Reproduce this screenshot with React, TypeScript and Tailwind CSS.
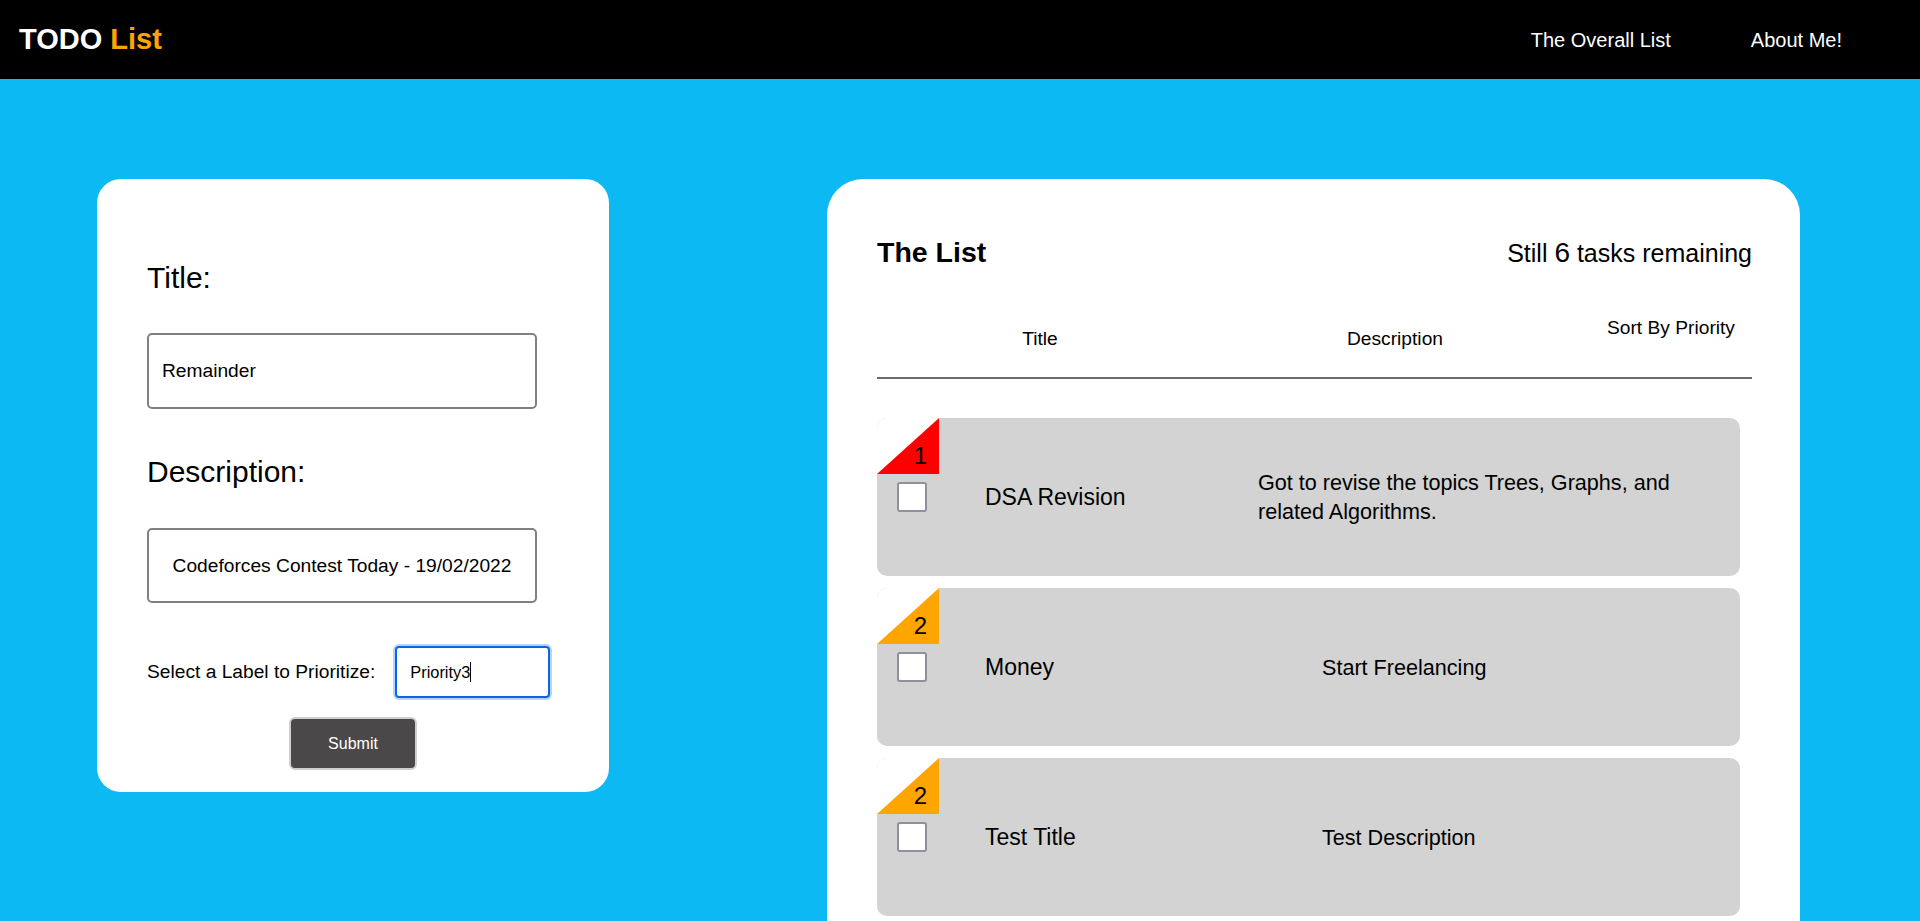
import React from "react";

type Task = { p: 1 | 2 | 3; title: string; desc: string; descCls: string };

const tasks: Task[] = [
  {
    p: 1,
    title: "DSA Revision",
    desc: "Got to revise the topics Trees, Graphs, and related Algorithms.",
    descCls: "w-[440px] shrink-0 text-[21.6px] leading-[29px]",
  },
  { p: 2, title: "Money", desc: "Start Freelancing", descCls: "ml-[64px] text-[21.6px] leading-[29px]" },
  { p: 2, title: "Test Title", desc: "Test Description", descCls: "ml-[64px] text-[21.6px] leading-[29px]" },
  { p: 3, title: "Gym", desc: "Leg Day", descCls: "ml-[64px] text-[21.6px] leading-[29px]" },
  { p: 3, title: "Reading", desc: "Finish the novel", descCls: "ml-[64px] text-[21.6px] leading-[29px]" },
  { p: 3, title: "Groceries", desc: "Buy vegetables", descCls: "ml-[64px] text-[21.6px] leading-[29px]" },
];

const prColor: Record<number, string> = {
  1: "bg-[#ff0000]",
  2: "bg-[#ffa500]",
  3: "bg-[#ffff00]",
};

function TaskCard({ t }: { t: Task }) {
  return (
    <div className="flex h-[158px] w-[863px] shrink-0 flex-col overflow-hidden rounded-[10px] bg-[#d3d3d3]">
      <div className="h-[56px] w-[62px] bg-white">
        <div
          className={`flex h-full w-full items-end justify-end pb-[6px] pr-[12px] text-[24px] leading-none text-black [clip-path:polygon(100%_0,100%_100%,0_100%)] ${prColor[t.p]}`}
        >
          {t.p}
        </div>
      </div>
      <div className="flex h-[46px] items-center pl-[20px]">
        <div className="h-[30px] w-[30px] shrink-0 rounded-[3px] border-2 border-[#8f8f9d] bg-white" />
        <div className="ml-[58px] w-[273px] shrink-0 text-[23px] leading-[27px]">{t.title}</div>
        <div className={t.descCls}>{t.desc}</div>
      </div>
    </div>
  );
}

export default function App() {
  return (
    <div className="font-['Liberation_Sans',Arial,sans-serif] text-black">
      <nav className="flex h-[79px] items-center justify-between bg-black pl-[19px] pr-[78px]">
        <div className="text-[29px] font-bold leading-[33px]">
          <span className="text-white">TODO</span> <span className="text-[#ffa500]">List</span>
        </div>
        <div className="flex items-center gap-[80px] text-[20px] text-white">
          <a>The Overall List</a>
          <a>About Me!</a>
        </div>
      </nav>

      <main className="flex min-h-[2670px] items-start bg-[#0db9f2] pl-[97px] pt-[100px] pb-[100px]">
        {/* Form card */}
        <div className="w-[512px] shrink-0 rounded-[24px] bg-white pb-[22px] pl-[50px] pt-[82px]">
          <label className="block text-[30px] leading-[34px]">Title:</label>
          <input
            readOnly
            defaultValue="Remainder"
            className="mt-[38px] block h-[76px] w-[390px] rounded-[5px] border-2 border-[#808080] px-[13px] text-[19.2px] outline-none"
          />
          <label className="mt-[46px] block text-[30px] leading-[34px]">Description:</label>
          <input
            readOnly
            defaultValue="Codeforces Contest Today - 19/02/2022"
            className="mt-[39px] block h-[75px] w-[390px] rounded-[5px] border-2 border-[#808080] px-[12px] text-center text-[19.2px] outline-none"
          />
          <div className="mt-[43px] flex items-center">
            <span className="text-[19.2px]">Select a Label to Prioritize:</span>
            <div className="ml-[20px] flex h-[52px] w-[155px] items-center rounded-[4px] border-2 border-[#0b63e5] px-[13px] text-[16.4px] shadow-[0_0_0_2px_#b3d4fc]">
              Priority3
              <span className="h-[20px] w-px bg-black" />
            </div>
          </div>
          <div className="mt-[19px] flex justify-center pr-[50px]">
            <button className="h-[53px] w-[128px] rounded-[6px] border-2 border-[#cfcfcf] bg-[#4a4848] text-[16px] text-white">
              Submit
            </button>
          </div>
        </div>

        {/* List card */}
        <div className="ml-[218px] w-[973px] shrink-0 rounded-[36px] bg-white pb-[60px] pl-[50px] pr-[48px] pt-[57px]">
          <div className="flex items-baseline justify-between">
            <h2 className="text-[28.5px] font-bold leading-[32px]">The List</h2>
            <p className="text-[25px] leading-[31px]">
              Still <span className="text-[28px]">6</span> tasks remaining
            </p>
          </div>
          <div className="mt-[48px] flex h-[60px] text-[19.2px] leading-[22px]">
            <div className="mt-[11px] w-[326px] shrink-0 text-center">Title</div>
            <div className="mt-[11px] w-[384px] shrink-0 text-center">Description</div>
            <div className="w-[168px] shrink-0 whitespace-nowrap text-center">Sort By Priority</div>
          </div>
          <div className="h-[2px] bg-[#6b6b6b]" />
          <div className="mt-[39px] flex flex-col gap-[12px]">
            {tasks.map((t, i) => (
              <TaskCard key={i} t={t} />
            ))}
          </div>
        </div>
      </main>
    </div>
  );
}
